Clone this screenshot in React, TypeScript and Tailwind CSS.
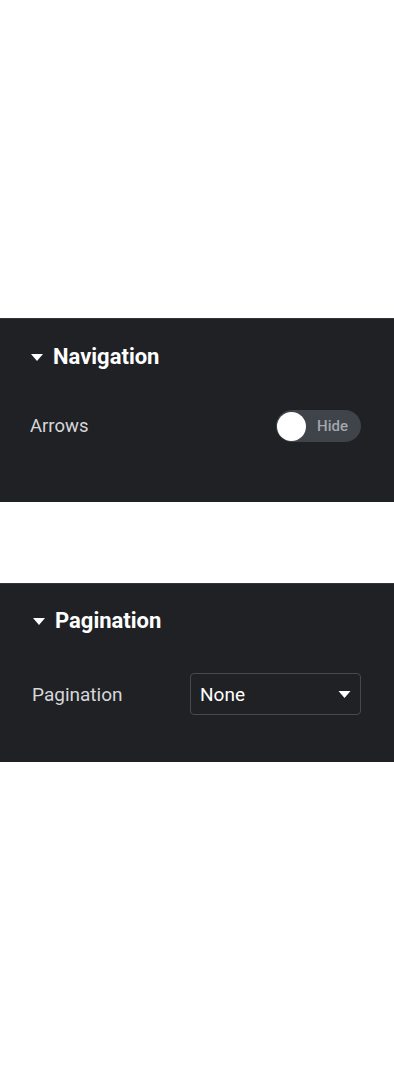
import React from "react";

const Caret = ({ className }: { className?: string }) => (
  <svg className={className} viewBox="0 0 12 7" fill="currentColor">
    <path d="M0 0h12L6 7z" />
  </svg>
);

export default function App() {
  return (
    <div className="w-[394px] h-[1080px] bg-white flex flex-col" style={{ fontFamily: "Roboto, 'Liberation Sans', sans-serif" }}>
      <div className="h-[318px] shrink-0" />
      <div className="h-[184px] shrink-0 bg-[#202125] border-t border-[#34353a] flex flex-col">
        <div className="flex items-center gap-[10px] pl-[31px] mt-[26px] h-[24px]">
          <Caret className="w-[12px] h-[7px] text-white" />
          <span className="text-white font-bold text-[22px] leading-none">Navigation</span>
        </div>
        <div className="flex items-center justify-between pl-[30px] pr-[33px] mt-[41px] h-[32px]">
          <span className="text-[#d6d7d9] text-[18.5px] leading-none">Arrows</span>
          <div className="w-[85px] h-[32px] rounded-full bg-[#3f434a] flex items-center pl-[1px]">
            <div className="w-[29px] h-[29px] rounded-full bg-white" />
            <span className="ml-[11px] text-[#a3a7ad] text-[15px] font-medium leading-none">Hide</span>
          </div>
        </div>
      </div>
      <div className="h-[81px] shrink-0" />
      <div className="h-[179px] shrink-0 bg-[#202125] border-t border-[#34353a] flex flex-col">
        <div className="flex items-center gap-[10px] pl-[33px] mt-[25px] h-[24px]">
          <Caret className="w-[12px] h-[7px] text-white" />
          <span className="text-white font-bold text-[22px] leading-none">Pagination</span>
        </div>
        <div className="flex items-center pl-[32px] mt-[40px] h-[42px]">
          <span className="text-[#d6d7d9] text-[19px] leading-none w-[158px]">Pagination</span>
          <div className="w-[171px] h-[42px] rounded-[4px] border border-[#47494e] flex items-center justify-between pl-[9px] pr-[9px]">
            <span className="text-white text-[19px] leading-none">None</span>
            <Caret className="w-[13px] h-[7px] text-white" />
          </div>
        </div>
      </div>
      <div className="flex-1" />
    </div>
  );
}
